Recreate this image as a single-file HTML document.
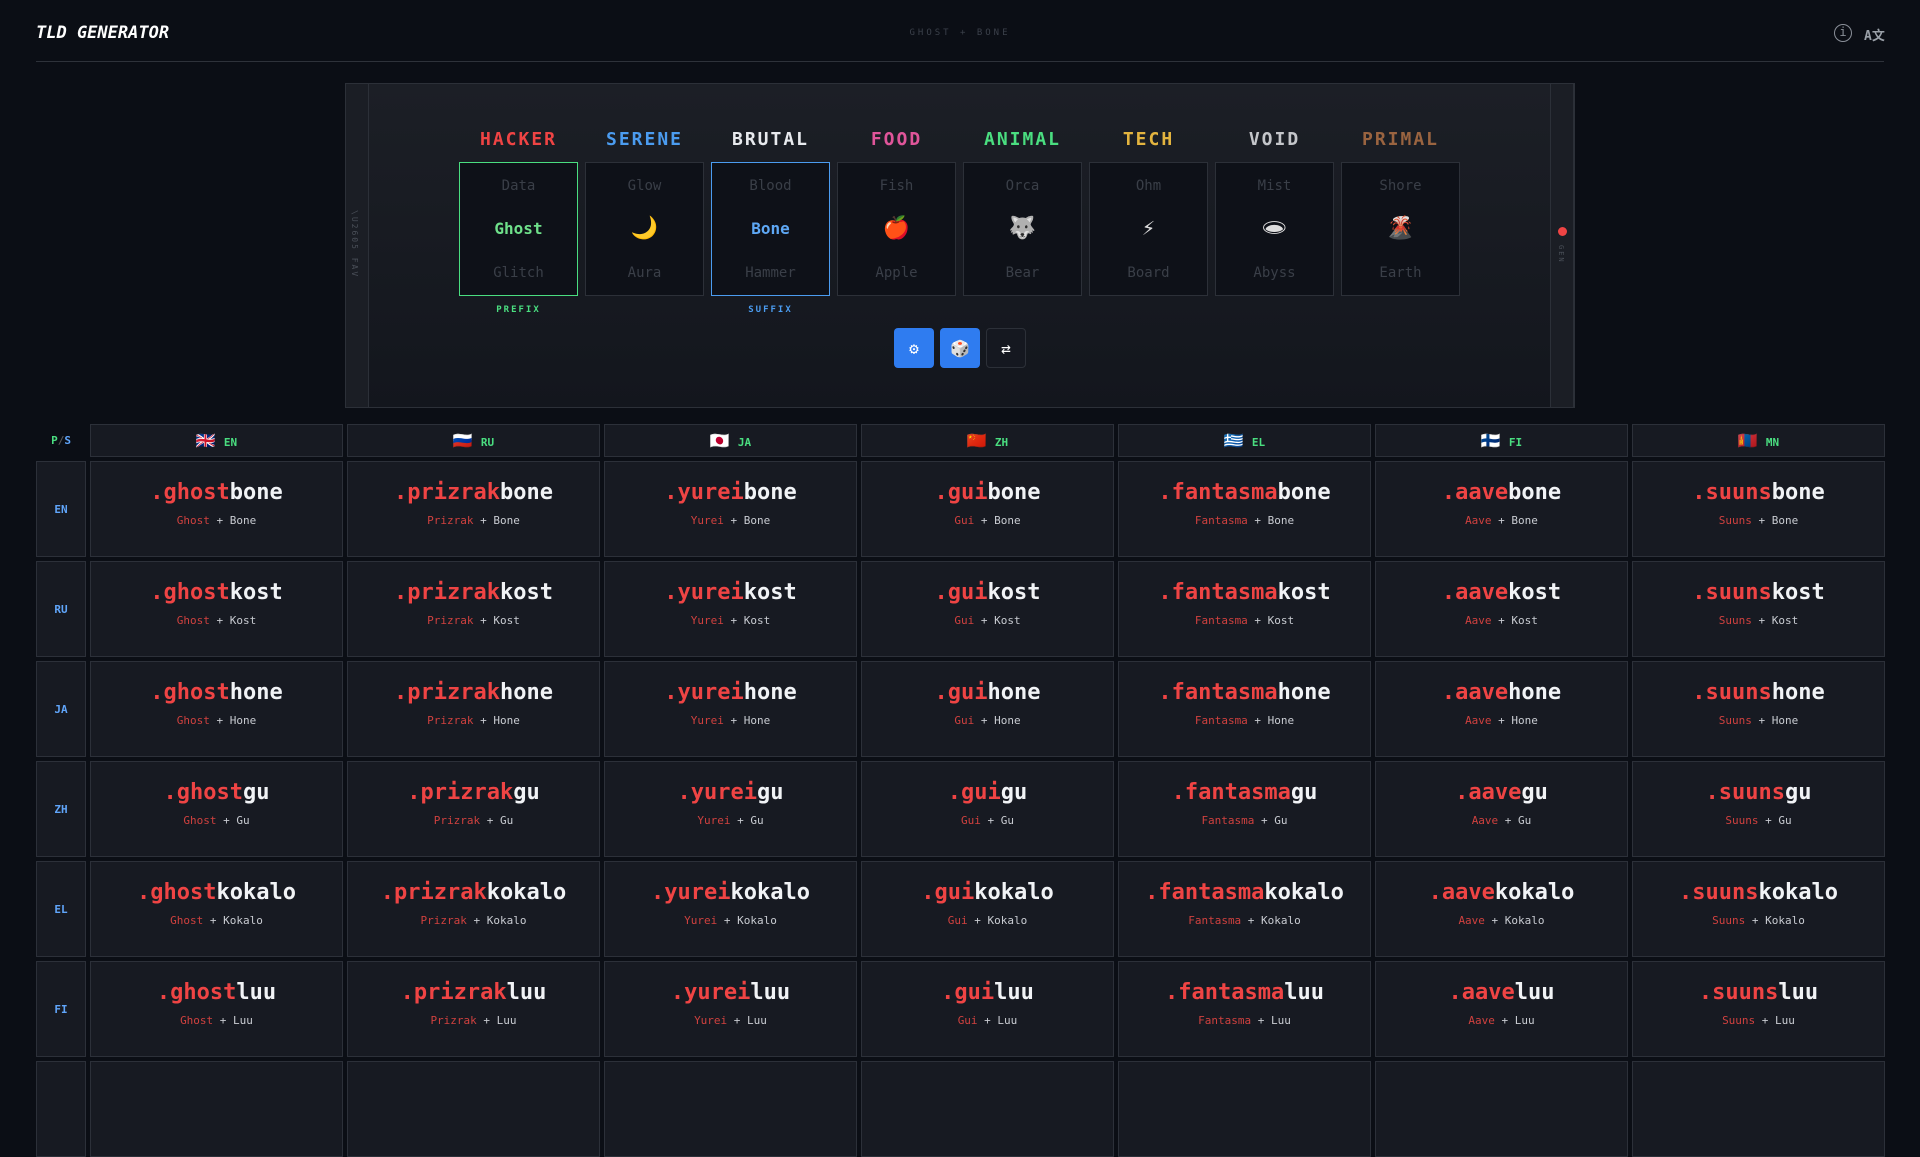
<!DOCTYPE html>
<html><head><meta charset="utf-8"><style>
*{box-sizing:border-box;margin:0;padding:0}
body{width:1920px;height:1080px;overflow:hidden;background:#0b0e15;font-family:"DejaVu Sans Mono","Liberation Mono","Noto Sans CJK SC",monospace;color:#e5e7eb;position:relative}
.abs{position:absolute}
.title{left:36px;top:23px;font-size:17px;font-weight:bold;font-style:italic;color:#fff}
.hline{left:36px;top:61px;width:1848px;height:1px;background:#2e323a}
.sub{left:0;width:1920px;top:28px;text-align:center;font-size:9px;letter-spacing:3px;color:#3b404a}
.panel{left:345px;top:83px;width:1230px;height:325px;border:1px solid #2c3038;background:linear-gradient(#1c1f26,#13161d)}
.strip{top:83px;width:24px;height:325px;border:1px solid #2c3038;background:#1b1e25}
.cat{top:129px;width:119px;text-align:center;font-size:18px;font-weight:bold;letter-spacing:2px}
.card{top:162px;width:119px;height:134px;border:1px solid #2c3038;background:#0e1118;text-align:center}
.card .t{position:absolute;left:0;right:0;top:15px;font-size:14px;color:#3a3f48}
.card .m{position:absolute;left:0;right:0;top:54px;font-size:16px;font-weight:bold;color:#ddd;height:24px;line-height:24px}
.card .m.e{font-size:22px;font-weight:normal}
.card .b{position:absolute;left:0;right:0;top:102px;font-size:14px;color:#3a3f48}
.lab{top:305px;width:119px;text-align:center;font-size:9px;font-weight:bold;letter-spacing:2px}
.btn{top:328px;width:40px;height:40px;border-radius:4px;display:flex;align-items:center;justify-content:center;font-size:16px;color:#fff}
.grid{left:36px;top:424px;display:grid;grid-template-columns:50px repeat(7,253px);grid-template-rows:33px repeat(7,96px);column-gap:4px;row-gap:4px}
.grid>div{border:1px solid #2c3039;background:#171a22;display:flex;align-items:center;justify-content:center;flex-direction:column}
.grid>div.corner{border:none;background:none;font-size:11px;font-weight:bold;flex-direction:row}
.ch{font-size:11px;font-weight:bold;color:#4ade80}
.ch span{font-size:16px;margin-right:8px}
.rh{font-size:11px;font-weight:bold;color:#60a5fa}
.d{font-size:22px;font-weight:bold;color:#f1f3f6;margin-top:-12px}
.d b{color:#ef4444}
.s{font-size:11px;color:#c9ccd2;margin-top:9px}
.s i{font-style:normal;color:#d0413f}
</style></head><body>
<div class="abs title">TLD GENERATOR</div>
<div class="abs sub">GHOST + BONE</div>
<div class="abs" style="left:1834px;top:24px;width:18px;height:18px;border:1.5px solid #8a8f98;border-radius:50%;color:#8a8f98;font-size:12px;text-align:center;line-height:15px">i</div>
<div class="abs" style="left:1864px;top:25px;font-size:13px;font-weight:bold;color:#9aa0a8;font-family:'DejaVu Sans Mono','Noto Sans CJK SC',monospace">A文</div>
<div class="abs hline"></div>

<div class="abs panel"></div>
<div class="abs strip" style="left:345px"></div>
<div class="abs" style="left:350px;top:210px;font-size:8px;color:#4a4f58;writing-mode:vertical-rl;letter-spacing:2px">\U2605 FAV</div>
<div class="abs strip" style="left:1550px"></div>
<div class="abs" style="left:1558px;top:227px;width:9px;height:9px;border-radius:50%;background:#ef4444"></div>
<div class="abs" style="left:1557px;top:245px;font-size:7px;color:#4a4f58;writing-mode:vertical-rl;letter-spacing:2px">GEN</div>

<div class="abs cat" style="left:459px;color:#ef4444">HACKER</div>
<div class="abs cat" style="left:585px;color:#4b9cf0">SERENE</div>
<div class="abs cat" style="left:711px;color:#e8eaee">BRUTAL</div>
<div class="abs cat" style="left:837px;color:#e0559a">FOOD</div>
<div class="abs cat" style="left:963px;color:#4ade80">ANIMAL</div>
<div class="abs cat" style="left:1089px;color:#e3b43f">TECH</div>
<div class="abs cat" style="left:1215px;color:#c4c6ca">VOID</div>
<div class="abs cat" style="left:1341px;color:#9a6440">PRIMAL</div>

<div class="abs card" style="left:459px;border-color:#4ade80"><div class="t">Data</div><div class="m" style="color:#6ee08a">Ghost</div><div class="b">Glitch</div></div>
<div class="abs card" style="left:585px"><div class="t">Glow</div><div class="m e">🌙</div><div class="b">Aura</div></div>
<div class="abs card" style="left:711px;border-color:#4b9cf0"><div class="t">Blood</div><div class="m" style="color:#5ea8f5">Bone</div><div class="b">Hammer</div></div>
<div class="abs card" style="left:837px"><div class="t">Fish</div><div class="m e">🍎</div><div class="b">Apple</div></div>
<div class="abs card" style="left:963px"><div class="t">Orca</div><div class="m e">🐺</div><div class="b">Bear</div></div>
<div class="abs card" style="left:1089px"><div class="t">Ohm</div><div class="m e">⚡</div><div class="b">Board</div></div>
<div class="abs card" style="left:1215px"><div class="t">Mist</div><div class="m e">🕳</div><div class="b">Abyss</div></div>
<div class="abs card" style="left:1341px"><div class="t">Shore</div><div class="m e">🌋</div><div class="b">Earth</div></div>
<div class="abs lab" style="left:459px;color:#4ade80">PREFIX</div>
<div class="abs lab" style="left:711px;color:#4b9cf0">SUFFIX</div>

<div class="abs btn" style="left:894px;background:#2f7cf0">⚙</div>
<div class="abs btn" style="left:940px;background:#2f7cf0">🎲</div>
<div class="abs btn" style="left:986px;background:#151820;border:1px solid #2c3038">⇄</div>

<div class="abs grid">
<div class="corner"><span style="color:#4ade80">P</span><span style="color:#555">/</span><span style="color:#60a5fa">S</span></div>
<div class="ch"><div><span>🇬🇧</span>EN</div></div>
<div class="ch"><div><span>🇷🇺</span>RU</div></div>
<div class="ch"><div><span>🇯🇵</span>JA</div></div>
<div class="ch"><div><span>🇨🇳</span>ZH</div></div>
<div class="ch"><div><span>🇬🇷</span>EL</div></div>
<div class="ch"><div><span>🇫🇮</span>FI</div></div>
<div class="ch"><div><span>🇲🇳</span>MN</div></div>
GRIDROWS
</div>
<script>
var P=["ghost","prizrak","yurei","gui","fantasma","aave","suuns"],S=["bone","kost","hone","gu","kokalo","luu",""],R=["EN","RU","JA","ZH","EL","FI",""];
var h="";function C(w){return w?w[0].toUpperCase()+w.slice(1):""}
for(var r=0;r<7;r++){h+='<div class="rh">'+R[r]+'</div>';for(var c=0;c<7;c++){h+=S[r]?'<div><div class="d"><b>.'+P[c]+'</b>'+S[r]+'</div><div class="s"><i>'+C(P[c])+'</i> + '+C(S[r])+'</div></div>':'<div></div>';}}
var g=document.querySelector('.grid');g.innerHTML=g.innerHTML.replace('GRIDROWS',h);
</script>
</body></html>
